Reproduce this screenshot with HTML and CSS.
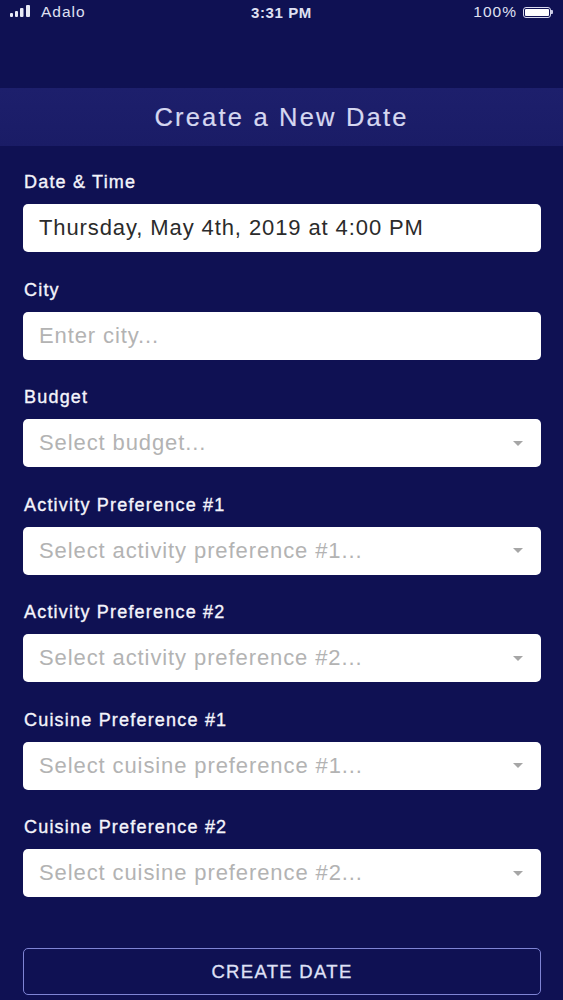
FILE: index.html
```html
<!DOCTYPE html>
<html lang="en">
<head>
    <meta charset="UTF-8">
    <title>Create a New Date</title>
    <link rel="stylesheet" href="styles.css">
</head>
<body>

    <div class="status-bar">
        <div class="status-left">
            <svg class="signal" width="24" height="12" viewBox="0 0 24 12">
                <rect x="0" y="8" width="3" height="4" rx="1"/>
                <rect x="5" y="6" width="3" height="6" rx="1"/>
                <rect x="10" y="3" width="3.5" height="9" rx="1"/>
                <rect x="16" y="0" width="4" height="12" rx="1"/>
            </svg>
            <span>Adalo</span>
        </div>
        <div class="status-time">3:31 PM</div>
        <div class="status-right">
            <span>100%</span>
            <div class="battery"><div class="battery-fill"></div></div>
            <div class="battery-nub"></div>
        </div>
    </div>

    <div class="app-header">
        <h1>Create a New Date</h1>
    </div>

    <div class="form">
        <div class="field">
            <label>Date &amp; Time</label>
            <div class="input"><span class="value">Thursday, May 4th, 2019 at 4:00 PM</span></div>
        </div>

        <div class="field">
            <label>City</label>
            <div class="input"><span class="placeholder">Enter city...</span></div>
        </div>

        <div class="field">
            <label>Budget</label>
            <div class="input select"><span class="placeholder">Select budget...</span><span class="caret"></span></div>
        </div>

        <div class="field">
            <label>Activity Preference #1</label>
            <div class="input select"><span class="placeholder">Select activity preference #1...</span><span class="caret"></span></div>
        </div>

        <div class="field">
            <label>Activity Preference #2</label>
            <div class="input select"><span class="placeholder">Select activity preference #2...</span><span class="caret"></span></div>
        </div>

        <div class="field">
            <label>Cuisine Preference #1</label>
            <div class="input select"><span class="placeholder">Select cuisine preference #1...</span><span class="caret"></span></div>
        </div>

        <div class="field">
            <label>Cuisine Preference #2</label>
            <div class="input select"><span class="placeholder">Select cuisine preference #2...</span><span class="caret"></span></div>
        </div>

        <button class="create-btn">CREATE DATE</button>
    </div>

</body>
</html>
```

FILE: styles.css
```css
body {
    margin: 0;
    background-color: #0f1153;
    font-family: "Liberation Sans", Arial, sans-serif;
    color: #fff;
}

/* Phone status bar */
.status-bar {
    height: 24px;
    display: grid;
    grid-template-columns: 1fr auto 1fr;
    align-items: center;
    padding: 0 10px;
    font-size: 15.5px;
    letter-spacing: 1px;
    color: #dfe0f2;
}

.status-left {
    display: flex;
    align-items: center;
    gap: 7px;
}

.signal { fill: #e8e9f6; margin-bottom: 2px; }

.status-time {
    font-weight: bold;
    font-size: 15px;
    letter-spacing: 0.6px;
}

.status-right {
    display: flex;
    align-items: center;
    justify-content: flex-end;
}

.status-right span { margin-right: 6px; }

.battery {
    width: 28px;
    height: 11px;
    border: 1px solid #d8d9ee;
    border-radius: 3px;
    padding: 1px;
    box-sizing: border-box;
}

.battery-fill {
    width: 100%;
    height: 100%;
    background-color: #fff;
    border-radius: 1px;
}

.battery-nub {
    width: 2px;
    height: 4px;
    background-color: #c8c9e4;
    border-radius: 0 1px 1px 0;
}

/* Title bar */
.app-header {
    margin-top: 64px;
    height: 58px;
    display: flex;
    align-items: center;
    justify-content: center;
    background: linear-gradient(#1d1f6c, #1a1c66);
}

.app-header h1 {
    margin: 0;
    font-size: 25.5px;
    font-weight: normal;
    letter-spacing: 2.2px;
    color: #d5d7f0;
    -webkit-text-stroke: 0.2px #d5d7f0;
}

/* Form */
.form {
    padding: 26px 22px 0 23px;
    display: flex;
    flex-direction: column;
    gap: 27.5px;
}

.field {
    display: flex;
    flex-direction: column;
}

.field label {
    font-size: 18px;
    line-height: 20px;
    letter-spacing: 1.2px;
    margin: 0 0 12px 1px;
    color: #f4f4fb;
    -webkit-text-stroke: 0.35px #f4f4fb;
}

.input {
    height: 48px;
    background-color: #fff;
    border-radius: 5px;
    padding: 0 18px 0 16px;
    display: flex;
    align-items: center;
    font-size: 22px;
    letter-spacing: 0.9px;
}

.value { color: #2b2b2b; }
.placeholder { color: #b3b3b3; flex: 1; }

.caret {
    width: 0;
    height: 0;
    border-left: 5px solid transparent;
    border-right: 5px solid transparent;
    border-top: 5px solid #a6a6a6;
}

.create-btn {
    margin-top: 23.5px;
    height: 47px;
    background: transparent;
    border: 1.5px solid #7f84d4;
    border-radius: 5px;
    font-family: inherit;
    font-size: 18.5px;
    letter-spacing: 1.3px;
    color: #dfe0f6;
    -webkit-text-stroke: 0.3px #dfe0f6;
}
```
